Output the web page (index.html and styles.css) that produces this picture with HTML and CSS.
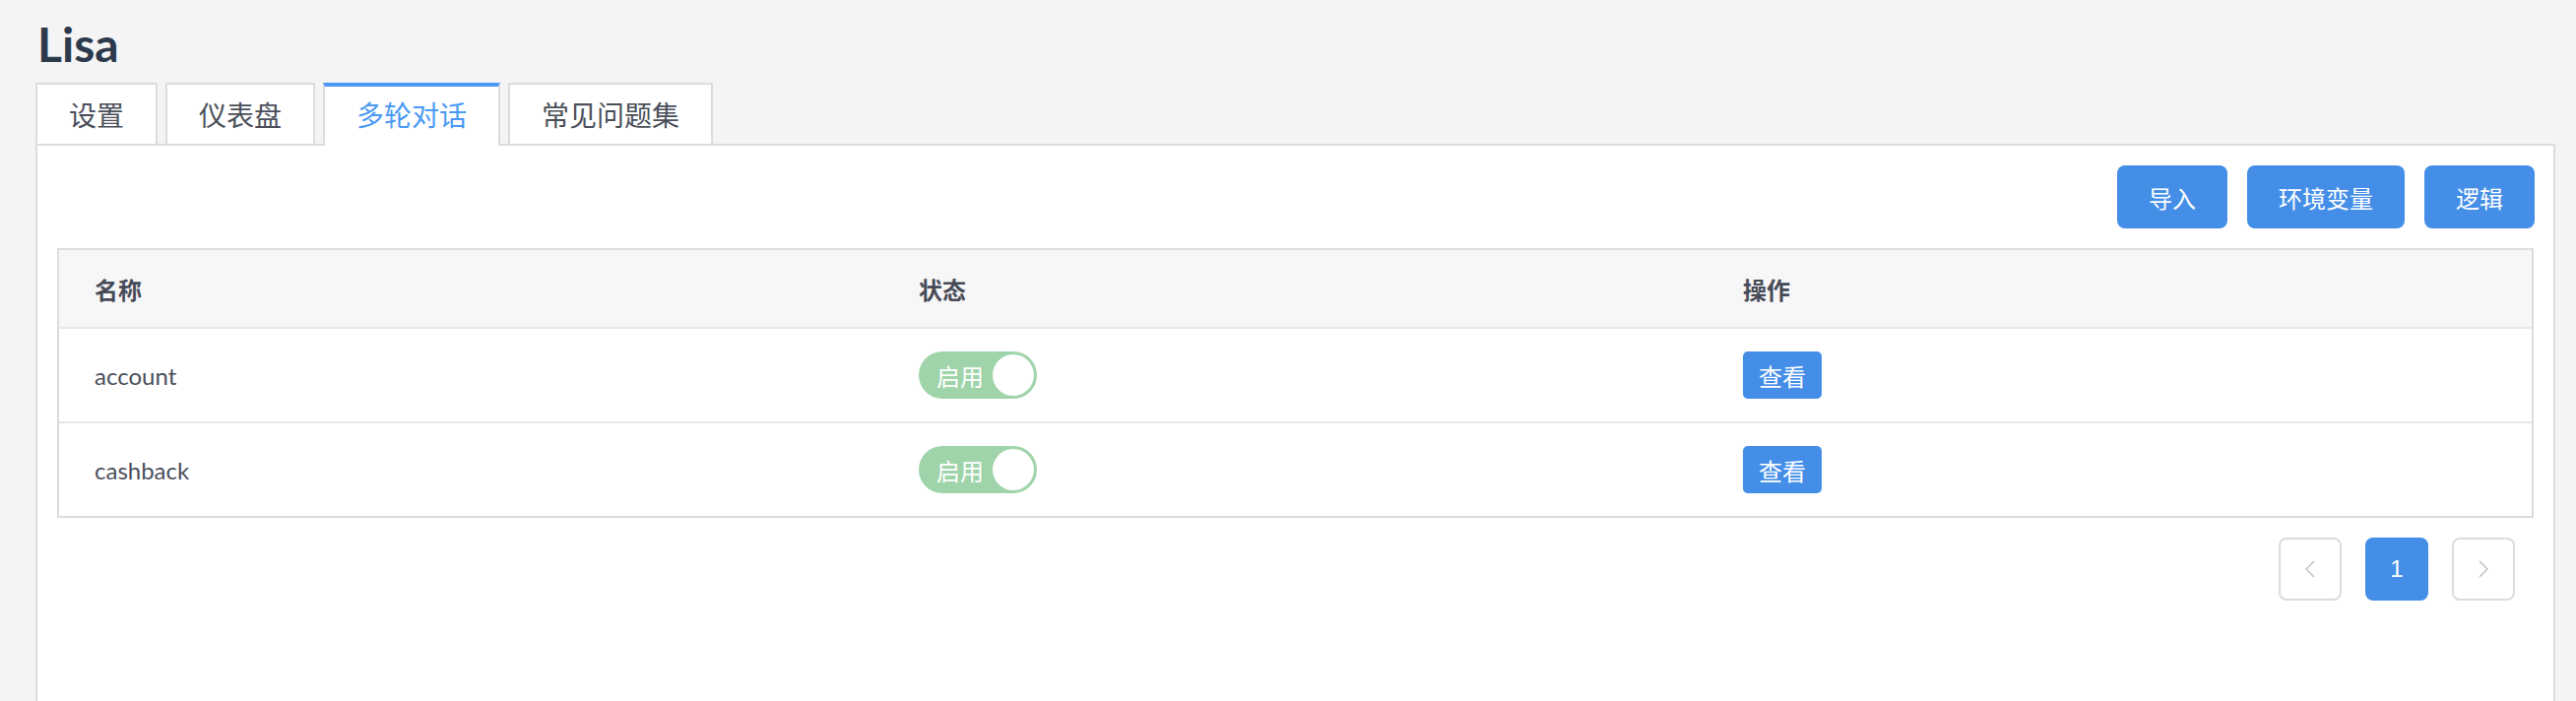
FILE: index.html
```html
<!DOCTYPE html>
<html lang="zh">
<head>
<meta charset="utf-8">
<title>Lisa</title>
<link rel="stylesheet" href="styles.css">
</head>
<body>
<div class="page">
  <h1 class="title">Lisa</h1>
  <nav class="tabs">
    <div class="tab">设置</div>
    <div class="tab">仪表盘</div>
    <div class="tab active">多轮对话</div>
    <div class="tab">常见问题集</div>
  </nav>
  <section class="panel">
    <div class="toolbar">
      <button class="btn">导入</button>
      <button class="btn">环境变量</button>
      <button class="btn">逻辑</button>
    </div>
    <div class="table">
      <div class="row head">
        <div class="cell">名称</div>
        <div class="cell">状态</div>
        <div class="cell">操作</div>
      </div>
      <div class="row">
        <div class="cell name">account</div>
        <div class="cell"><span class="switch"><span class="switch-label">启用</span><span class="knob"></span></span></div>
        <div class="cell"><button class="btn-sm">查看</button></div>
      </div>
      <div class="row">
        <div class="cell name">cashback</div>
        <div class="cell"><span class="switch"><span class="switch-label">启用</span><span class="knob"></span></span></div>
        <div class="cell"><button class="btn-sm">查看</button></div>
      </div>
    </div>
    <div class="pager">
      <button class="page-btn"><svg width="12" height="18" viewBox="0 0 12 18"><polyline points="10,1 2,9 10,17" fill="none" stroke="#c4c4cc" stroke-width="1.6"/></svg></button>
      <button class="page-btn current">1</button>
      <button class="page-btn"><svg width="12" height="18" viewBox="0 0 12 18"><polyline points="2,1 10,9 2,17" fill="none" stroke="#c4c4cc" stroke-width="1.6"/></svg></button>
    </div>
  </section>
</div>
</body>
</html>
```
FILE: styles.css
```css
html, body {
  margin: 0;
  padding: 0;
  height: 100%;
  overflow: hidden;
}
body {
  background: #f4f4f4;
  font-family: "Lato", "Noto Sans CJK SC", sans-serif;
  color: #4a4f5b;
}
.page {
  box-sizing: border-box;
  height: 100vh;
  padding: 16px 21px 0 36px;
  display: flex;
  flex-direction: column;
}
.title {
  margin: 0 0 10px 2px;
  font-size: 48px;
  line-height: 58px;
  font-weight: 700;
  color: #2c3a4b;
}
.tabs {
  display: flex;
  align-items: flex-start;
  gap: 8px;
  margin-bottom: -2px;
  position: relative;
  z-index: 1;
}
.tab {
  box-sizing: border-box;
  height: 62px;
  padding: 0 32px;
  border: 2px solid #dcdce0;
  border-bottom: 0;
  background: #fff;
  font-size: 28px;
  color: #4b4f5a;
  display: flex;
  align-items: center;
}
.tab.active {
  height: 64px;
  border-top: 4px solid #4a9af5;
  padding-bottom: 4px;
  color: #4a9af5;
}
.panel {
  flex: 1;
  background: #fff;
  border: 2px solid #dcdce0;
  border-bottom: 0;
  padding: 20px 19px 0 20px;
}
.toolbar {
  display: flex;
  justify-content: flex-end;
  gap: 20px;
  margin-bottom: 20px;
}
.btn {
  height: 64px;
  padding: 0 32px;
  border: 0;
  border-radius: 8px;
  background: #448ee8;
  color: #fff;
  font-family: inherit;
  font-size: 24px;
}
.table {
  border: 2px solid #dcdce0;
  margin-right: 1px;
}
.row {
  display: grid;
  grid-template-columns: repeat(3, 1fr);
  height: 94px;
  align-items: center;
}
.row + .row {
  border-top: 2px solid #e8e8ec;
}
.row.head {
  height: 78px;
  background: #f7f7f7;
  font-weight: 600;
  color: #474b58;
}
.cell {
  padding-left: 36px;
  font-size: 24px;
  display: flex;
  align-items: center;
}
.cell.name {
  font-weight: 400;
}
.switch {
  box-sizing: border-box;
  width: 120px;
  height: 48px;
  border-radius: 24px;
  background: #9fd4aa;
  display: flex;
  align-items: center;
  justify-content: space-between;
  padding: 0 3px 0 18px;
}
.switch-label {
  color: #fff;
  font-size: 24px;
}
.knob {
  width: 42px;
  height: 42px;
  border-radius: 50%;
  background: #fff;
}
.btn-sm {
  height: 48px;
  padding: 0 16px;
  border: 0;
  border-radius: 5px;
  background: #448ee8;
  color: #fff;
  font-family: inherit;
  font-size: 24px;
}
.pager {
  display: flex;
  justify-content: flex-end;
  gap: 24px;
  margin-top: 20px;
  padding-right: 20px;
}
.page-btn {
  box-sizing: border-box;
  width: 64px;
  height: 64px;
  border: 2px solid #dcdce0;
  border-radius: 8px;
  background: #fff;
  display: flex;
  align-items: center;
  justify-content: center;
  padding: 0;
}
.page-btn.current {
  border: 0;
  background: #448ee8;
  color: #fff;
  font-family: "Liberation Sans", sans-serif;
  font-size: 24px;
}
```
